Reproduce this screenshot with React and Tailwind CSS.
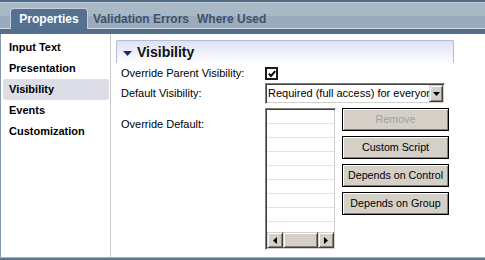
export default function App() {
  const navItems = ["Input Text", "Presentation", "Visibility", "Events", "Customization"];
  const sunken =
    "border border-t-[#808080] border-l-[#808080] border-r-[#ffffff] border-b-[#ffffff] shadow-[inset_1px_1px_0_#404040,inset_-1px_-1px_0_#d4d0c8]";
  const raised =
    "bg-[#d4d0c8] border border-t-[#d4d0c8] border-l-[#d4d0c8] border-r-[#404040] border-b-[#404040] shadow-[inset_1px_1px_0_#ffffff,inset_-1px_-1px_0_#808080]";
  const buttons = [
    { label: "Remove", disabled: true },
    { label: "Custom Script" },
    { label: "Depends on Control" },
    { label: "Depends on Group" },
  ];
  return (
    <div className="w-[485px] h-[260px] bg-white flex flex-col overflow-hidden font-['Liberation_Sans',Arial,sans-serif] text-black">
      <div className="h-[2px] shrink-0 bg-[#4e6c88]" />
      <div className="h-[27px] shrink-0 flex items-end pl-[10px] bg-[linear-gradient(to_bottom,#c6d0da_0px,#c6d0da_1px,#a9b8c7_1px,#a9b8c7_14px,#9babbc_14px,#9babbc_26px,#d2dae2_26px,#d2dae2_27px)]">
        <div className="w-[78px] h-[21px] rounded-t-[4px] bg-[#55718f] border border-b-0 border-[#c3cfdb] flex items-center justify-center text-white font-bold text-[12px] leading-none">
          Properties
        </div>
        <div className="ml-[5px] w-[104px] h-[21px] flex items-center text-[#3e5268] font-bold text-[12px] leading-none whitespace-nowrap">
          Validation Errors
        </div>
        <div className="h-[21px] flex items-center text-[#3e5268] font-bold text-[12px] leading-none whitespace-nowrap">
          Where Used
        </div>
      </div>
      <div className="h-[5px] shrink-0 bg-[#52708e]" />
      <div className="flex-1 min-h-0 flex">
        <div className="w-[111px] shrink-0 border-l border-l-[#8797ab] border-r border-r-[#c8c8c8] pt-[3px] flex flex-col">
          {navItems.map((n) => (
            <div
              key={n}
              className={
                "h-[21px] leading-[20px] text-[11px] font-bold pl-[6px] ml-[2px] mr-[1px] rounded-[3px] whitespace-nowrap " +
                (n === "Visibility" ? "bg-[#dcdde6]" : "")
              }
            >
              {n}
            </div>
          ))}
        </div>
        <div className="flex-1 pl-[5px] pt-[6px]">
          <div className="w-[338px] h-[23px] border border-b-0 border-[#b6bcd8] rounded-t-[2px] bg-[linear-gradient(to_bottom,#dce1f2,#ffffff)] flex items-center pl-[6px]">
            <svg width="9" height="5" viewBox="0 0 9 5" className="mt-[2px]">
              <polygon points="0,0 9,0 4.5,5" fill="#1c2a6e" />
            </svg>
            <span className="ml-[5px] text-[14px] font-bold text-[#111]">Visibility</span>
          </div>
          <div className="pl-[5px] text-[11px]">
            <div className="mt-[4px] h-[13px] flex items-center">
              <div className="w-[144px] whitespace-nowrap">Override Parent Visibility:</div>
              <div className="w-[13px] h-[13px] bg-white flex items-center justify-center border-2 border-[#1a1a1a]">
                <svg width="8" height="8" viewBox="0 0 8 8">
                  <polyline points="0.8,3.6 3,6 7.2,1.2" fill="none" stroke="#000" strokeWidth="2" />
                </svg>
              </div>
            </div>
            <div className="mt-[3px] h-[21px] flex items-center">
              <div className="w-[144px] whitespace-nowrap">Default Visibility:</div>
              <div className={"w-[180px] h-[21px] bg-white flex items-center p-[1px] " + sunken}>
                <div className="flex-1 overflow-hidden whitespace-nowrap pl-[1px] leading-[17px]">
                  Required (full access) for everyone
                </div>
                <div className={"w-[14px] h-[17px] shrink-0 flex items-center justify-center " + raised}>
                  <svg width="7" height="4" viewBox="0 0 7 4">
                    <polygon points="0,0 7,0 3.5,4" fill="#000" />
                  </svg>
                </div>
              </div>
            </div>
            <div className="mt-[4px] flex">
              <div className="w-[144px] pt-[9px] leading-[14px] whitespace-nowrap">Override Default:</div>
              <div className={"w-[71px] h-[142px] bg-white flex flex-col p-[1px] " + sunken}>
                <div className="flex-1 min-h-0 overflow-hidden">
                  {Array.from({ length: 9 }).map((_, i) => (
                    <div key={i} className="h-[14px] border-b border-[#e3e3e3]" />
                  ))}
                </div>
                <div className="h-[16px] shrink-0 flex">
                  <div className={"w-[16px] h-[16px] flex items-center justify-center " + raised}>
                    <svg width="4" height="7" viewBox="0 0 4 7">
                      <polygon points="4,0 4,7 0,3.5" fill="#000" />
                    </svg>
                  </div>
                  <div className={"flex-1 h-[16px] " + raised} />
                  <div className={"w-[16px] h-[16px] flex items-center justify-center " + raised}>
                    <svg width="4" height="7" viewBox="0 0 4 7">
                      <polygon points="0,0 0,7 4,3.5" fill="#000" />
                    </svg>
                  </div>
                </div>
              </div>
              <div className="ml-[6px] flex flex-col gap-[5px]">
                {buttons.map((b) => (
                  <div
                    key={b.label}
                    className={
                      "w-[107px] h-[23px] border border-black bg-[#d4d0c8] shadow-[inset_1px_1px_0_#ffffff,inset_-1px_-1px_0_#808080] flex items-center justify-center whitespace-nowrap text-[10.7px] " +
                      (b.disabled ? "text-[#a0a0a0]" : "text-black")
                    }
                  >
                    {b.label}
                  </div>
                ))}
              </div>
            </div>
          </div>
        </div>
      </div>
      <div className="h-[3px] shrink-0 border-t border-[#a6b4c3] bg-[#5a7693]" />
    </div>
  );
}
